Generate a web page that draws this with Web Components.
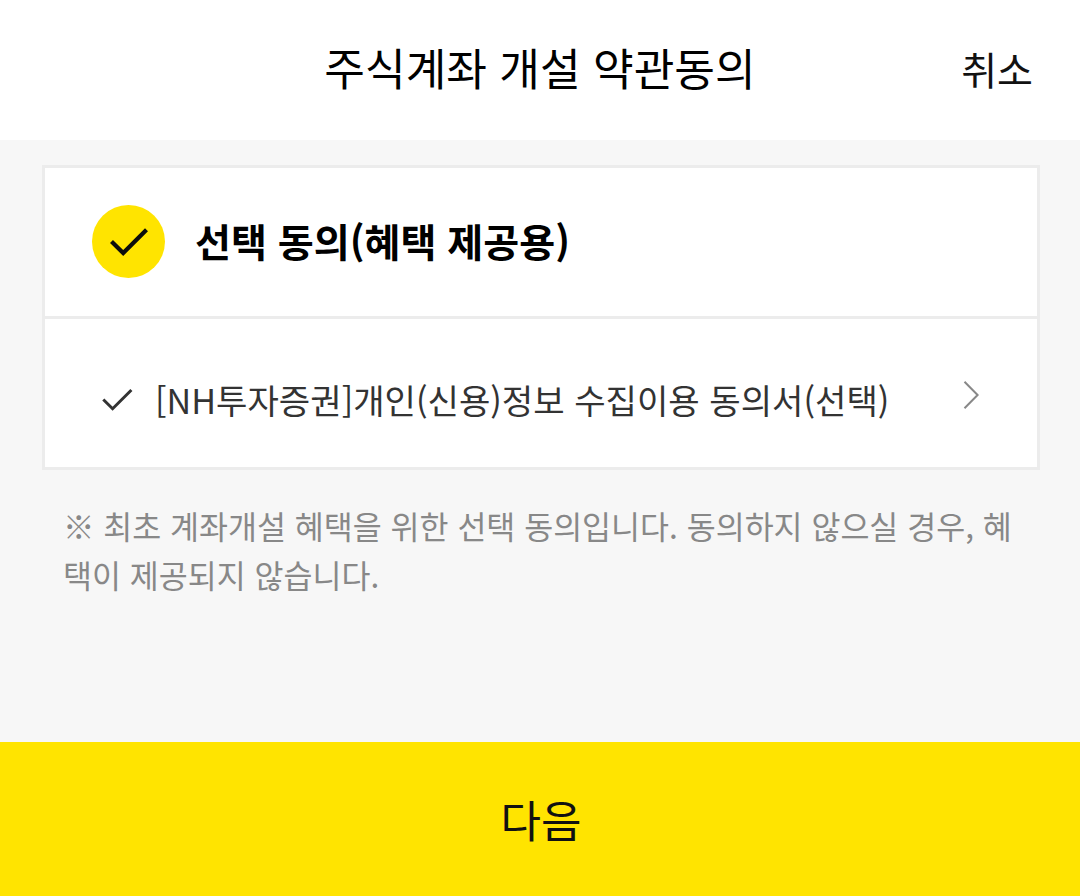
<!DOCTYPE html>
<html lang="ko">
<head>
<meta charset="utf-8">
<title>주식계좌 개설 약관동의</title>
<style>
  body {
    margin: 0;
    font-family: "Noto Sans CJK KR", "Noto Sans", sans-serif;
    background-color: #f7f7f7;
  }
</style>
</head>
<body>
<terms-page>
  <page-header slot="header" action="취소">주식계좌 개설 약관동의</page-header>
  <terms-group label="선택 동의(혜택 제공용)">
    <terms-item>[NH투자증권]개인(신용)정보 수집이용 동의서(선택)</terms-item>
  </terms-group>
  <terms-note>※ 최초 계좌개설 혜택을 위한 선택 동의입니다. 동의하지 않으실 경우, 혜택이 제공되지 않습니다.</terms-note>
  <next-button slot="footer">다음</next-button>
</terms-page>

<script>
const templatePage = document.createElement("template");

templatePage.innerHTML = `
    <style>
      :host {
        display: flex;
        flex-direction: column;
        height: 896px;
        overflow: hidden;
      }

      main {
        flex: 1;
        padding: 25px 40px 0 42px;
      }
    </style>
    <slot name="header"></slot>
    <main><slot></slot></main>
    <slot name="footer"></slot>
`;

class TermsPage extends HTMLElement {
  constructor() {
    super();
    this.attachShadow({ mode: "open" });
    this.shadowRoot.appendChild(templatePage.content.cloneNode(true));
  }
}

const templateHeader = document.createElement("template");

templateHeader.innerHTML = `
    <style>
      :host {
        display: grid;
        grid-template-columns: 1fr auto 1fr;
        align-items: center;
        box-sizing: border-box;
        height: 140px;
        padding: 0 47px 4px;
        background-color: #fff;
        color: #000;
      }

      h1 {
        grid-column: 2;
        margin: 0 0 2px;
        font-size: 44.2px;
        font-weight: 400;
        line-height: 60px;
        white-space: nowrap;
      }

      button {
        justify-self: end;
        padding: 0;
        border: 0;
        background: none;
        color: #111;
        font: inherit;
        font-size: 39px;
        line-height: 60px;
        cursor: pointer;
      }
    </style>
    <h1><slot></slot></h1>
    <button type="button"></button>
`;

class PageHeader extends HTMLElement {
  constructor() {
    super();
    this.attachShadow({ mode: "open" });
    this.shadowRoot.appendChild(templateHeader.content.cloneNode(true));
    this.shadowRoot.querySelector("button").textContent = this.getAttribute("action");
  }
}

const templateGroup = document.createElement("template");

templateGroup.innerHTML = `
    <style>
      :host {
        display: block;
        box-sizing: border-box;
        height: 305px;
        border: 3px solid #ececec;
        background-color: #fff;
      }

      .group__header {
        display: flex;
        align-items: center;
        gap: 30px;
        box-sizing: border-box;
        height: 151px;
        padding: 0 0 2px 47px;
        border-bottom: 3px solid #ececec;
      }

      svg {
        flex: none;
        display: block;
      }

      h2 {
        margin: 0 0 2px;
        color: #000;
        font-size: 39.1px;
        font-weight: 700;
        line-height: 56px;
        white-space: nowrap;
      }
    </style>
    <div class="group__header">
      <svg width="73" height="73" viewBox="0 0 73 73">
        <circle cx="36.5" cy="36.5" r="36.5" fill="#ffe400"/>
        <path d="M19.5 36.5 L31.2 48 L54.5 24.7" fill="none" stroke="#0c0c0c" stroke-width="4.2"/>
      </svg>
      <h2></h2>
    </div>
    <slot></slot>
`;

class TermsGroup extends HTMLElement {
  constructor() {
    super();
    this.attachShadow({ mode: "open" });
    this.shadowRoot.appendChild(templateGroup.content.cloneNode(true));
    this.shadowRoot.querySelector("h2").textContent = this.getAttribute("label");
  }
}

const templateItem = document.createElement("template");

templateItem.innerHTML = `
    <style>
      :host {
        display: flex;
        align-items: center;
        box-sizing: border-box;
        height: 148px;
        padding: 14px 57px 0 56px;
        color: #333;
        cursor: pointer;
      }

      svg {
        flex: none;
        display: block;
      }

      .item__text {
        flex: 1;
        margin: 0 0 2px 21px;
        font-size: 34.13px;
        line-height: 50px;
        white-space: nowrap;
      }

      .item__arrow {
        margin-bottom: 10px;
      }
    </style>
    <svg width="33" height="26" viewBox="0 0 33 26">
      <path d="M2.3 12.5 L11.6 21.7 L30.4 3" fill="none" stroke="#333" stroke-width="3"/>
    </svg>
    <span class="item__text"><slot></slot></span>
    <svg class="item__arrow" width="18" height="30" viewBox="0 0 18 30">
      <path d="M2.5 1.8 L15.6 15 L2.5 28.2" fill="none" stroke="#888" stroke-width="2"/>
    </svg>
`;

class TermsItem extends HTMLElement {
  constructor() {
    super();
    this.attachShadow({ mode: "open" });
    this.shadowRoot.appendChild(templateItem.content.cloneNode(true));
  }
}

const templateNote = document.createElement("template");

templateNote.innerHTML = `
    <style>
      :host {
        display: block;
        padding: 31px 20px 0 21px;
        color: #888;
        font-size: 31.5px;
        line-height: 49px;
        word-break: break-all;
      }
    </style>
    <slot></slot>
`;

class TermsNote extends HTMLElement {
  constructor() {
    super();
    this.attachShadow({ mode: "open" });
    this.shadowRoot.appendChild(templateNote.content.cloneNode(true));
  }
}

const templateNext = document.createElement("template");

templateNext.innerHTML = `
    <style>
      :host {
        display: block;
      }

      button {
        display: block;
        width: 100%;
        height: 154px;
        padding: 0 0 1px 2px;
        border: 0;
        background-color: #ffe400;
        color: #111;
        font: inherit;
        font-size: 44px;
        cursor: pointer;
      }
    </style>
    <button type="button"><slot></slot></button>
`;

class NextButton extends HTMLElement {
  constructor() {
    super();
    this.attachShadow({ mode: "open" });
    this.shadowRoot.appendChild(templateNext.content.cloneNode(true));
  }
}

window.customElements.define("terms-page", TermsPage);
window.customElements.define("page-header", PageHeader);
window.customElements.define("terms-group", TermsGroup);
window.customElements.define("terms-item", TermsItem);
window.customElements.define("terms-note", TermsNote);
window.customElements.define("next-button", NextButton);
</script>
</body>
</html>
